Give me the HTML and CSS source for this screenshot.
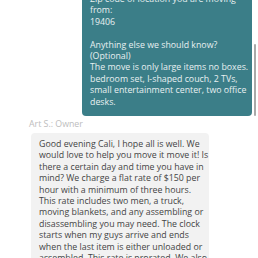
FILE: index.html
```html
<!DOCTYPE html>
<html>
<head>
<meta charset="utf-8">
<link rel="stylesheet" href="styles.css">
</head>
<body>
<div class="chat">
  <div class="msg msg-out">
    <div class="bubble bubble-out">Zip code of location you are moving<br>from:<br>19406<br><br>Anything else we should know?<br>(Optional)<br>The move is only large items no boxes.<br>bedroom set, l-shaped couch, 2 TVs,<br>small entertainment center, two office<br>desks.</div>
  </div>
  <div class="msg msg-in">
    <div class="sender">Art S.: Owner</div>
    <div class="bubble bubble-in">Good evening Cali, I hope all is well. We<br>would love to help you move it move it! Is<br>there a certain day and time you have in<br>mind? We charge a flat rate of $150 per<br>hour with a minimum of three hours.<br>This rate includes two men, a truck,<br>moving blankets, and any assembling or<br>disassembling you may need. The clock<br>starts when my guys arrive and ends<br>when the last item is either unloaded or<br>assembled. This rate is prorated. We also<br>offer packing services if you need them.</div>
  </div>
  <div class="scroll-thumb"></div>
</div>
</body>
</html>
```

FILE: styles.css
```css
html, body {
  margin: 0;
  padding: 0;
  width: 258px;
  height: 258px;
  overflow: hidden;
  background: #ffffff;
}

.chat {
  position: relative;
  height: 258px;
  font-family: "Open Sans", "Liberation Sans", sans-serif;
  font-size: 8.8px;
  line-height: 11.4px;
}

.msg {
  display: flex;
  flex-direction: column;
}

.msg-out {
  align-items: flex-end;
  margin-top: -12px;
  padding-right: 6px;
}

.msg-in {
  align-items: flex-start;
  padding-left: 29px;
  margin-top: 3px;
}

.bubble {
  white-space: nowrap;
  border-radius: 4px;
  padding: 6px 8px;
  box-sizing: border-box;
}

.bubble-out {
  width: 170px;
  background: #3b7e88;
  color: #e8f0f1;
  padding-bottom: 7.5px;
}

.sender {
  color: #bdbdbd;
  margin-bottom: 3px;
}

.bubble-in {
  width: 178px;
  margin-left: 2px;
  background: #f2f2f2;
  color: #444444;
}

.scroll-thumb {
  position: absolute;
  left: 254px;
  top: 56px;
  width: 2px;
  height: 72px;
  border-radius: 1px;
  background: #a9a9a9;
}
```
